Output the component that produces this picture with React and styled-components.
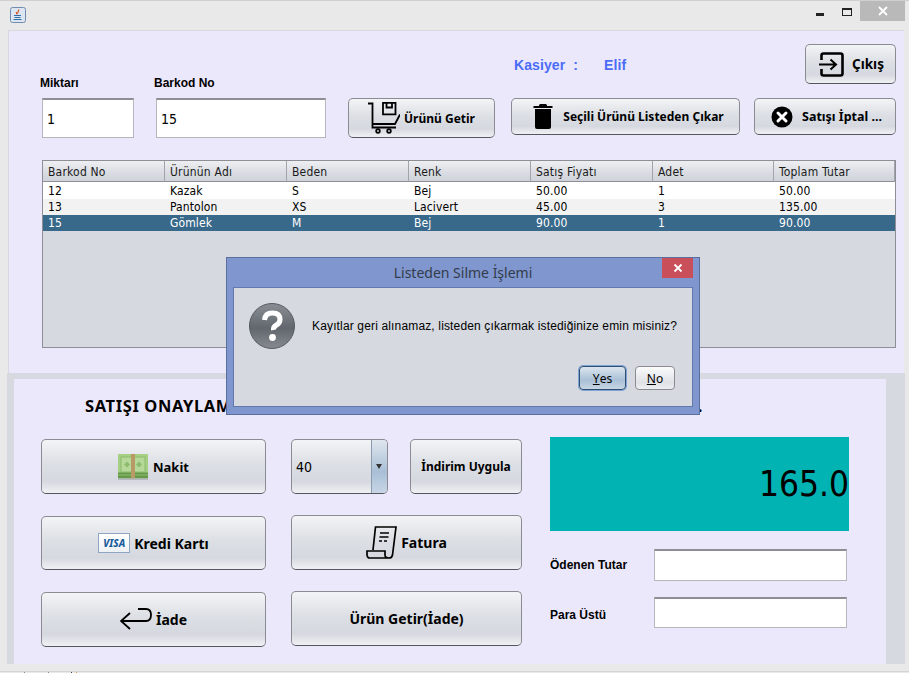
import React from 'react'
import styled, { createGlobalStyle } from 'styled-components'

const GlobalStyle = createGlobalStyle`
  html, body {
    margin: 0;
    padding: 0;
    background: #e9e9e9;
  }
  * {
    box-sizing: border-box;
  }
  svg {
    flex-shrink: 0;
  }
`

const FONT = `"Noto Sans", Tahoma, sans-serif`
const NARROW = `"DejaVu Sans Condensed", "DejaVu Sans", sans-serif`
const LABEL = `"Liberation Sans", Arial, sans-serif`

const columns = [
  { title: 'Barkod No', width: 122 },
  { title: 'Ürünün Adı', width: 122 },
  { title: 'Beden', width: 122 },
  { title: 'Renk', width: 122 },
  { title: 'Satış Fiyatı', width: 122 },
  { title: 'Adet', width: 121 },
  { title: 'Toplam Tutar', width: 121 },
]
const rows = [
  ['12', 'Kazak', 'S', 'Bej', '50.00', '1', '50.00'],
  ['13', 'Pantolon', 'XS', 'Lacivert', '45.00', '3', '135.00'],
  ['15', 'Gömlek', 'M', 'Bej', '90.00', '1', '90.00'],
]

function JavaIcon() {
  return (
    <svg width="16" height="16" viewBox="0 0 16 16">
      <rect x="0.5" y="0.5" width="15" height="15" rx="2" fill="#dbe6f2" stroke="#6f8db0" />
      <path d="M8.5 2.5c1 1.5-1.5 2.5-.5 4M6.5 5c-.5 1 .5 1.500.5 2.500" fill="none" stroke="#d8541e" strokeWidth="1.200" />
      <path d="M4 8.500h7M4.500 10.500h6M3.500 12.500h8" stroke="#2f6ea5" strokeWidth="1" />
    </svg>
  )
}

function CartIcon() {
  return (
    <svg width="32" height="32" viewBox="0 0 32 32" fill="none" stroke="#000" strokeWidth="1.800">
      <path d="M0 1.500h4.500v24H28" />
      <path d="M5 22h22l5-9.500" />
      <path d="M15 .9h12.500v11.500H15z" />
      <path d="M18.500 1v4.500h5.500V1" />
      <circle cx="10" cy="29" r="1.800" />
      <circle cx="21" cy="29" r="1.800" />
    </svg>
  )
}

function TrashIcon() {
  return (
    <svg width="20" height="25" viewBox="0 0 20 25">
      <path d="M6 1.500Q6 0 7.500 0h5Q14 0 14 1.500V2h5.500v2H.5V2H6z" fill="#000" />
      <path d="M2 5h16v18q0 2-2 2H4q-2 0-2-2z" fill="#000" />
    </svg>
  )
}

function CancelIcon() {
  return (
    <svg width="22" height="22" viewBox="0 0 22 22">
      <circle cx="11" cy="11" r="10.500" fill="#000" />
      <path d="M7 7l8 8M15 7l-8 8" stroke="#fff" strokeWidth="3" strokeLinecap="round" />
    </svg>
  )
}

function ExitIcon() {
  return (
    <svg width="25" height="25" viewBox="0 0 25 25" fill="none" stroke="#000">
      <path d="M2.500 8V3.500q0-2 2-2h17q2 0 2 2v18q0 2-2 2h-17q-2 0-2-2V17" strokeWidth="2.600" />
      <path d="M0 12.500h16M11.500 7.500l5.500 5-5.500 5" strokeWidth="2" />
    </svg>
  )
}

function MoneyIcon() {
  return (
    <svg width="30" height="26" viewBox="0 0 30 26">
      <rect x="0" y="0" width="30" height="24" rx="1" fill="#a5cf82" />
      <rect x="3" y="3" width="24" height="15" fill="#b6d99a" stroke="#8dbb6e" />
      <path d="M6 10.500l3-3 3 3-3 3zM18 10.500l3-3 3 3-3 3z" fill="#8dbb6e" />
      <rect x="0" y="18.500" width="30" height="6" fill="#66994a" />
      <rect x="0" y="20.500" width="30" height="1" fill="#8dbb6e" />
      <rect x="13" y="0" width="4" height="24.500" fill="#b89a66" />
      <rect x="0" y="24.500" width="30" height="1.500" fill="#b6b8bd" />
    </svg>
  )
}

function ReturnIcon() {
  return (
    <svg width="32" height="24" viewBox="0 0 32 24" fill="none" stroke="#000" strokeWidth="1.800">
      <path d="M18 1h8q5 0 5 6t-5 6H2" />
      <path d="M10 5l-9 8 9 8" />
    </svg>
  )
}

function ReceiptIcon() {
  return (
    <svg width="31" height="33" viewBox="0 0 31 33" fill="none" stroke="#000" strokeWidth="1.700">
      <path d="M7 24L9.500 1H30l-3.500 28q-.5 3-3.500 3H4q-3 0-3-3.500V25h18v4q0 3 4 3" />
      <path d="M14 7h9M13.500 11h9M13 15h3M18 15h3" strokeWidth="1.600" />
    </svg>
  )
}

function QuestionIcon() {
  return (
    <svg width="46" height="46" viewBox="0 0 46 46">
      <defs>
        <linearGradient id="questionFill" x1="0" y1="0" x2="0" y2="1">
          <stop offset="0" stopColor="#8a8e94" />
          <stop offset="0.55" stopColor="#62676e" />
          <stop offset="1" stopColor="#868a90" />
        </linearGradient>
      </defs>
      <circle cx="23" cy="23" r="22.500" fill="url(#questionFill)" stroke="#55595f" />
      <path d="M15.500 17q.5-7 8-7t7.500 6.500q0 3.500-3.500 5.500T24.500 27" fill="none" stroke="#fff" strokeWidth="5" />
      <circle cx="23.500" cy="34.500" r="3.400" fill="#fff" />
    </svg>
  )
}

function App() {
  return (
    <>
      <GlobalStyle />
      <Window>
        <TitleBar>
          <JavaIcon />
          <Controls>
            <MinimizeMark />
            <MaximizeMark />
            <CloseBox>
              <svg width="10" height="10" viewBox="0 0 10 10">
                <path d="M1 1l8 8M9 1l-8 8" stroke="#fff" strokeWidth="1.800" />
              </svg>
            </CloseBox>
          </Controls>
        </TitleBar>

        <TopPanel>
          <TopArea>
            <Fields>
              <Field>
                <FieldLabel>Miktarı</FieldLabel>
                <TextBox $width={92}>1</TextBox>
              </Field>
              <Field>
                <FieldLabel>Barkod No</FieldLabel>
                <TextBox $width={170}>15</TextBox>
              </Field>
            </Fields>
            <Actions>
              <CashierRow>
                <Cashier>
                  <span>Kasiyer&nbsp; :</span>
                  <span>Elif</span>
                </Cashier>
                <Button $width={91} $height={40} $size={13.5} $pad={2}>
                  <ExitIcon />
                  Çıkış
                </Button>
              </CashierRow>
              <ActionRow>
                <Button $width={147} $height={40} $gap={4}>
                  <CartIcon />
                  Ürünü Getir
                </Button>
                <Button $width={229} $height={37} $gap={10} $pad={6}>
                  <TrashIcon />
                  Seçili Ürünü Listeden Çıkar
                </Button>
                <Button $width={142} $height={37} $gap={9} $size={12.5} $pad={3}>
                  <CancelIcon />
                  Satışı İptal ...
                </Button>
              </ActionRow>
            </Actions>
          </TopArea>

          <TableFrame>
            <SalesTable>
              <thead>
                <tr>
                  {columns.map((c) => (
                    <HeadCell key={c.title} $width={c.width}>{c.title}</HeadCell>
                  ))}
                </tr>
              </thead>
              <tbody>
                {rows.map((row, i) => (
                  <DataRow key={row[0]} $index={i} $selected={i === 2}>
                    {row.map((v, j) => (
                      <DataCell key={j}>{v}</DataCell>
                    ))}
                  </DataRow>
                ))}
              </tbody>
            </SalesTable>
          </TableFrame>
        </TopPanel>

        <BottomPanel>
          <BottomInner>
            <SaleTitle>
              <span>SATIŞI ONAYLAMA</span>
              <span>.</span>
            </SaleTitle>
            <BottomGrid>
              <PayColumn>
                <Button $height={55} $size={13} $gap={5}>
                  <MoneyIcon />
                  Nakit
                </Button>
                <Button $height={54} $size={14} $gap={4}>
                  <VisaCard>VISA</VisaCard>
                  Kredi Kartı
                </Button>
                <Button $height={55} $size={14} $gap={4}>
                  <ReturnIcon />
                  İade
                </Button>
              </PayColumn>
              <MiddleColumn>
                <DiscountRow>
                  <Combo>
                    <ComboValue>40</ComboValue>
                    <ComboArrow />
                  </Combo>
                  <Button $width={112} $height={55}>İndirim Uygula</Button>
                </DiscountRow>
                <Button $height={55} $size={14} $gap={4}>
                  <ReceiptIcon />
                  Fatura
                </Button>
                <Button $height={55} $size={14}>Ürün Getir(İade)</Button>
              </MiddleColumn>
              <Summary>
                <TotalBox>165.0</TotalBox>
                <PayRow $top={18}>
                  <PayLabel>Ödenen Tutar</PayLabel>
                  <TextBox $width={193} $height={32} />
                </PayRow>
                <PayRow $top={16}>
                  <PayLabel $drop={4}>Para Üstü</PayLabel>
                  <TextBox $width={193} $height={31} />
                </PayRow>
              </Summary>
            </BottomGrid>
          </BottomInner>
        </BottomPanel>

        <Footer>
          <Tick $left={24} />
          <Tick $left={23} />
          <Tick $left={22} $color="#444" />
          <Tick $left={4} $color="#d9a441" />
        </Footer>

        <Dialog>
          <DialogTitle>
            Listeden Silme İşlemi
            <DialogClose>
              <svg width="10" height="10" viewBox="0 0 10 10">
                <path d="M1.500 1.500l7 7M8.500 1.500l-7 7" stroke="#fff" strokeWidth="1.800" />
              </svg>
            </DialogClose>
          </DialogTitle>
          <DialogBody>
            <DialogMessage>
              <QuestionIcon />
              <span>Kayıtlar geri alınamaz, listeden çıkarmak istediğinize emin misiniz?</span>
            </DialogMessage>
            <DialogButtons>
              <DialogButton $width={47} $primary>
                <u>Y</u>es
              </DialogButton>
              <DialogButton $width={40}>
                <u>N</u>o
              </DialogButton>
            </DialogButtons>
          </DialogBody>
        </Dialog>
      </Window>
    </>
  )
}

export default App

const Window = styled.div`
  position: relative;
  width: 909px;
  height: 673px;
  overflow: hidden;
  background: #e9e9e9;
  border-top: 1px solid #d0d0d0;
  font-family: ${FONT};
  color: #000;
`

const TitleBar = styled.div`
  height: 29px;
  padding-left: 10px;
  padding-top: 6px;
  display: flex;
  align-items: flex-start;
  justify-content: space-between;
`

const Controls = styled.div`
  display: flex;
  align-items: flex-start;
  margin-top: -6px;
  margin-right: 4px;
`

const MinimizeMark = styled.div`
  width: 8px;
  height: 3px;
  background: #222;
  margin-top: 12px;
  margin-right: 18px;
`

const MaximizeMark = styled.div`
  width: 10px;
  height: 8px;
  border: 1px solid #222;
  border-top-width: 2px;
  margin-top: 7px;
  margin-right: 8px;
`

const CloseBox = styled.div`
  width: 45px;
  height: 20px;
  background: #b9b9b9;
  display: flex;
  align-items: center;
  justify-content: center;
`

const TopPanel = styled.div`
  width: 896px;
  height: 343px;
  margin-left: 8px;
  padding: 13px 8px 0 33px;
  background: #ece8fc;
  border-top: 1px solid #d6d9df;
  border-left: 1px solid #d6d9df;
`

const TopArea = styled.div`
  display: flex;
  align-items: flex-end;
`

const Fields = styled.div`
  display: flex;
  gap: 22px;
  margin-right: 22px;
`

const Field = styled.div`
  display: flex;
  flex-direction: column;
`

const FieldLabel = styled.label`
  font-family: ${LABEL};
  font-size: 12px;
  font-weight: 700;
  line-height: 16px;
  margin: 0 0 7px -2px;
`

const TextBox = styled.div`
  width: ${(p) => p.$width}px;
  height: ${(p) => p.$height || 40}px;
  padding-left: 4px;
  display: flex;
  align-items: center;
  font-family: ${NARROW};
  font-size: 14px;
  background: #fff;
  border: 1px solid #b6b6bc;
  border-top: 2px solid #8e8e94;
`

const Actions = styled.div`
  flex: 1;
  display: flex;
  flex-direction: column;
  gap: 14px;
`

const CashierRow = styled.div`
  display: flex;
  align-items: center;
  justify-content: space-between;
  padding-left: 166px;
`

const Cashier = styled.div`
  display: flex;
  gap: 26px;
  padding-top: 2px;
  font-family: ${LABEL};
  font-size: 14px;
  font-weight: 700;
  letter-spacing: 0.1px;
  color: #4a6cf7;
`

const ActionRow = styled.div`
  display: flex;
  align-items: flex-start;
  gap: 16px;
  & > :nth-child(3) {
    margin-left: -2px;
  }
`

const Button = styled.div`
  width: ${(p) => (p.$width ? `${p.$width}px` : '100%')};
  height: ${(p) => p.$height}px;
  padding-left: ${(p) => p.$pad || 0}px;
  display: flex;
  align-items: center;
  justify-content: center;
  gap: ${(p) => p.$gap || 8}px;
  font-size: ${(p) => p.$size || 12}px;
  font-weight: 700;
  white-space: nowrap;
  border: 1px solid #8b8c92;
  border-bottom-color: #55565c;
  border-radius: 5px;
  background: linear-gradient(180deg, #f3f4f6 0%, #dcdfe4 45%, #d5d8df 78%, #f0f1f4 100%);
`

const TableFrame = styled.div`
  height: 188px;
  margin-top: 22px;
  background: #d6d9df;
  border: 1px solid #8e8f96;
`

const SalesTable = styled.table`
  width: 852px;
  table-layout: fixed;
  border-collapse: separate;
  border-spacing: 0;
  font-family: ${NARROW};
`

const HeadCell = styled.th`
  width: ${(p) => p.$width}px;
  height: 21px;
  padding: 1px 0 0 5px;
  text-align: left;
  font-size: 12px;
  font-weight: 400;
  letter-spacing: 0.2px;
  color: #1a1a1a;
  background: linear-gradient(180deg, #eeeff2 0%, #d9dce2 60%, #cfd2d9 100%);
  border-right: 1px solid #a2a4ab;
  border-bottom: 1px solid #8e8f96;
`

const DataRow = styled.tr`
  height: ${(p) => (p.$index === 0 ? 17 : 16)}px;
  color: ${(p) => (p.$selected ? '#fff' : '#000')};
  background: ${(p) => (p.$selected ? '#39698a' : p.$index === 1 ? '#f2f2f2' : '#fff')};
`

const DataCell = styled.td`
  padding: 1px 0 0 5px;
  font-size: 12px;
  line-height: 15px;
  letter-spacing: 0.1px;
`

const BottomPanel = styled.div`
  width: 898px;
  height: 291px;
  margin-left: 7px;
  padding: 6px 19px 0 7px;
  background: #d6d9df;
`

const BottomInner = styled.div`
  height: 285px;
  padding: 0 0 0 27px;
  background: #ece8fc;
`

const SaleTitle = styled.div`
  height: 58px;
  width: 662px;
  padding: 16px 0 0 44px;
  display: flex;
  justify-content: space-between;
  font-size: 16.5px;
  font-weight: 700;
  letter-spacing: 0.6px;
  line-height: 22px;
  white-space: nowrap;
`

const BottomGrid = styled.div`
  display: flex;
  align-items: flex-start;
`

const PayColumn = styled.div`
  width: 225px;
  margin-top: 2px;
  margin-right: 25px;
  display: flex;
  flex-direction: column;
  gap: 22px;
`

const MiddleColumn = styled.div`
  width: 231px;
  margin-top: 2px;
  margin-right: 28px;
  display: flex;
  flex-direction: column;
  gap: 21px;
`

const DiscountRow = styled.div`
  display: flex;
  justify-content: space-between;
`

const Combo = styled.div`
  width: 97px;
  height: 55px;
  display: flex;
  border: 1px solid #8b8c92;
  border-bottom-color: #55565c;
  border-radius: 5px;
  overflow: hidden;
  background: linear-gradient(180deg, #f3f4f6 0%, #dcdfe4 45%, #d5d8df 78%, #f0f1f4 100%);
`

const ComboValue = styled.div`
  flex: 1;
  padding-left: 4px;
  display: flex;
  align-items: center;
  font-family: ${NARROW};
  font-size: 14px;
`

const ComboArrow = styled.div`
  position: relative;
  width: 16px;
  background: linear-gradient(180deg, #dfe6ee 0%, #a9bfd6 60%, #c7d6e6 100%);
  border-left: 1px solid #8b9bb0;
  &::after {
    content: '';
    position: absolute;
    left: 4px;
    top: 24px;
    border-left: 3.5px solid transparent;
    border-right: 3.5px solid transparent;
    border-top: 5px solid #333;
  }
`

const VisaCard = styled.div`
  width: 32px;
  height: 20px;
  display: flex;
  align-items: center;
  justify-content: center;
  font-size: 10px;
  font-style: italic;
  font-weight: 800;
  color: #1a5c9c;
  background: linear-gradient(180deg, #fff 0%, #eef1f5 100%);
  border: 1px solid #8ea6c4;
`

const Summary = styled.div`
  width: 299px;
`

const TotalBox = styled.div`
  height: 94px;
  display: flex;
  align-items: center;
  justify-content: flex-end;
  font-family: ${NARROW};
  font-size: 35px;
  background: #02b3b3;
  color: #000;
`

const PayRow = styled.div`
  display: flex;
  align-items: center;
  margin-top: ${(p) => p.$top}px;
`

const PayLabel = styled.div`
  width: 104px;
  padding-top: ${(p) => p.$drop || 0}px;
  font-family: ${LABEL};
  font-size: 12px;
  font-weight: 700;
`

const Footer = styled.div`
  display: flex;
  height: 2px;
  margin-top: 7px;
  border-top: 1px solid #d4d4d4;
`

const Tick = styled.div`
  width: 1px;
  height: 1px;
  margin-left: ${(p) => p.$left}px;
  background: ${(p) => p.$color || '#888'};
`

const Dialog = styled.div`
  position: absolute;
  left: 226px;
  top: 256px;
  width: 474px;
  height: 158px;
  padding: 0 6px 7px 6px;
  display: flex;
  flex-direction: column;
  background: #7f96cf;
  border: 1px solid #5b6f9e;
`

const DialogTitle = styled.div`
  position: relative;
  height: 29px;
  display: flex;
  align-items: center;
  justify-content: center;
  font-size: 14px;
  color: #333c4a;
`

const DialogClose = styled.div`
  position: absolute;
  right: 0;
  top: 0;
  width: 31px;
  height: 20px;
  display: flex;
  align-items: center;
  justify-content: center;
  background: #c9505a;
`

const DialogBody = styled.div`
  flex: 1;
  padding: 15px 17px 0 15px;
  background: #d6d9df;
  border: 1px solid #6279ad;
`

const DialogMessage = styled.div`
  display: flex;
  align-items: center;
  gap: 17px;
  font-family: ${LABEL};
  font-size: 12px;
  letter-spacing: 0.15px;
  white-space: nowrap;
`

const DialogButtons = styled.div`
  display: flex;
  justify-content: flex-end;
  gap: 9px;
  margin-top: 17px;
`

const DialogButton = styled.div`
  width: ${(p) => p.$width}px;
  height: 24px;
  display: flex;
  align-items: center;
  justify-content: center;
  font-size: 12px;
  border-radius: 4px;
  border: 1px solid ${(p) => (p.$primary ? '#2f4f72' : '#8b8c92')};
  box-shadow: ${(p) => (p.$primary ? '0 0 0 1px #7fa3d6' : 'none')};
  background: ${(p) =>
    p.$primary
      ? 'linear-gradient(180deg, #dbe5ef 0%, #a9c0d6 60%, #c7d6e4 100%)'
      : 'linear-gradient(180deg, #fbfbfc 0%, #dfe1e6 70%, #eceef1 100%)'};
`
